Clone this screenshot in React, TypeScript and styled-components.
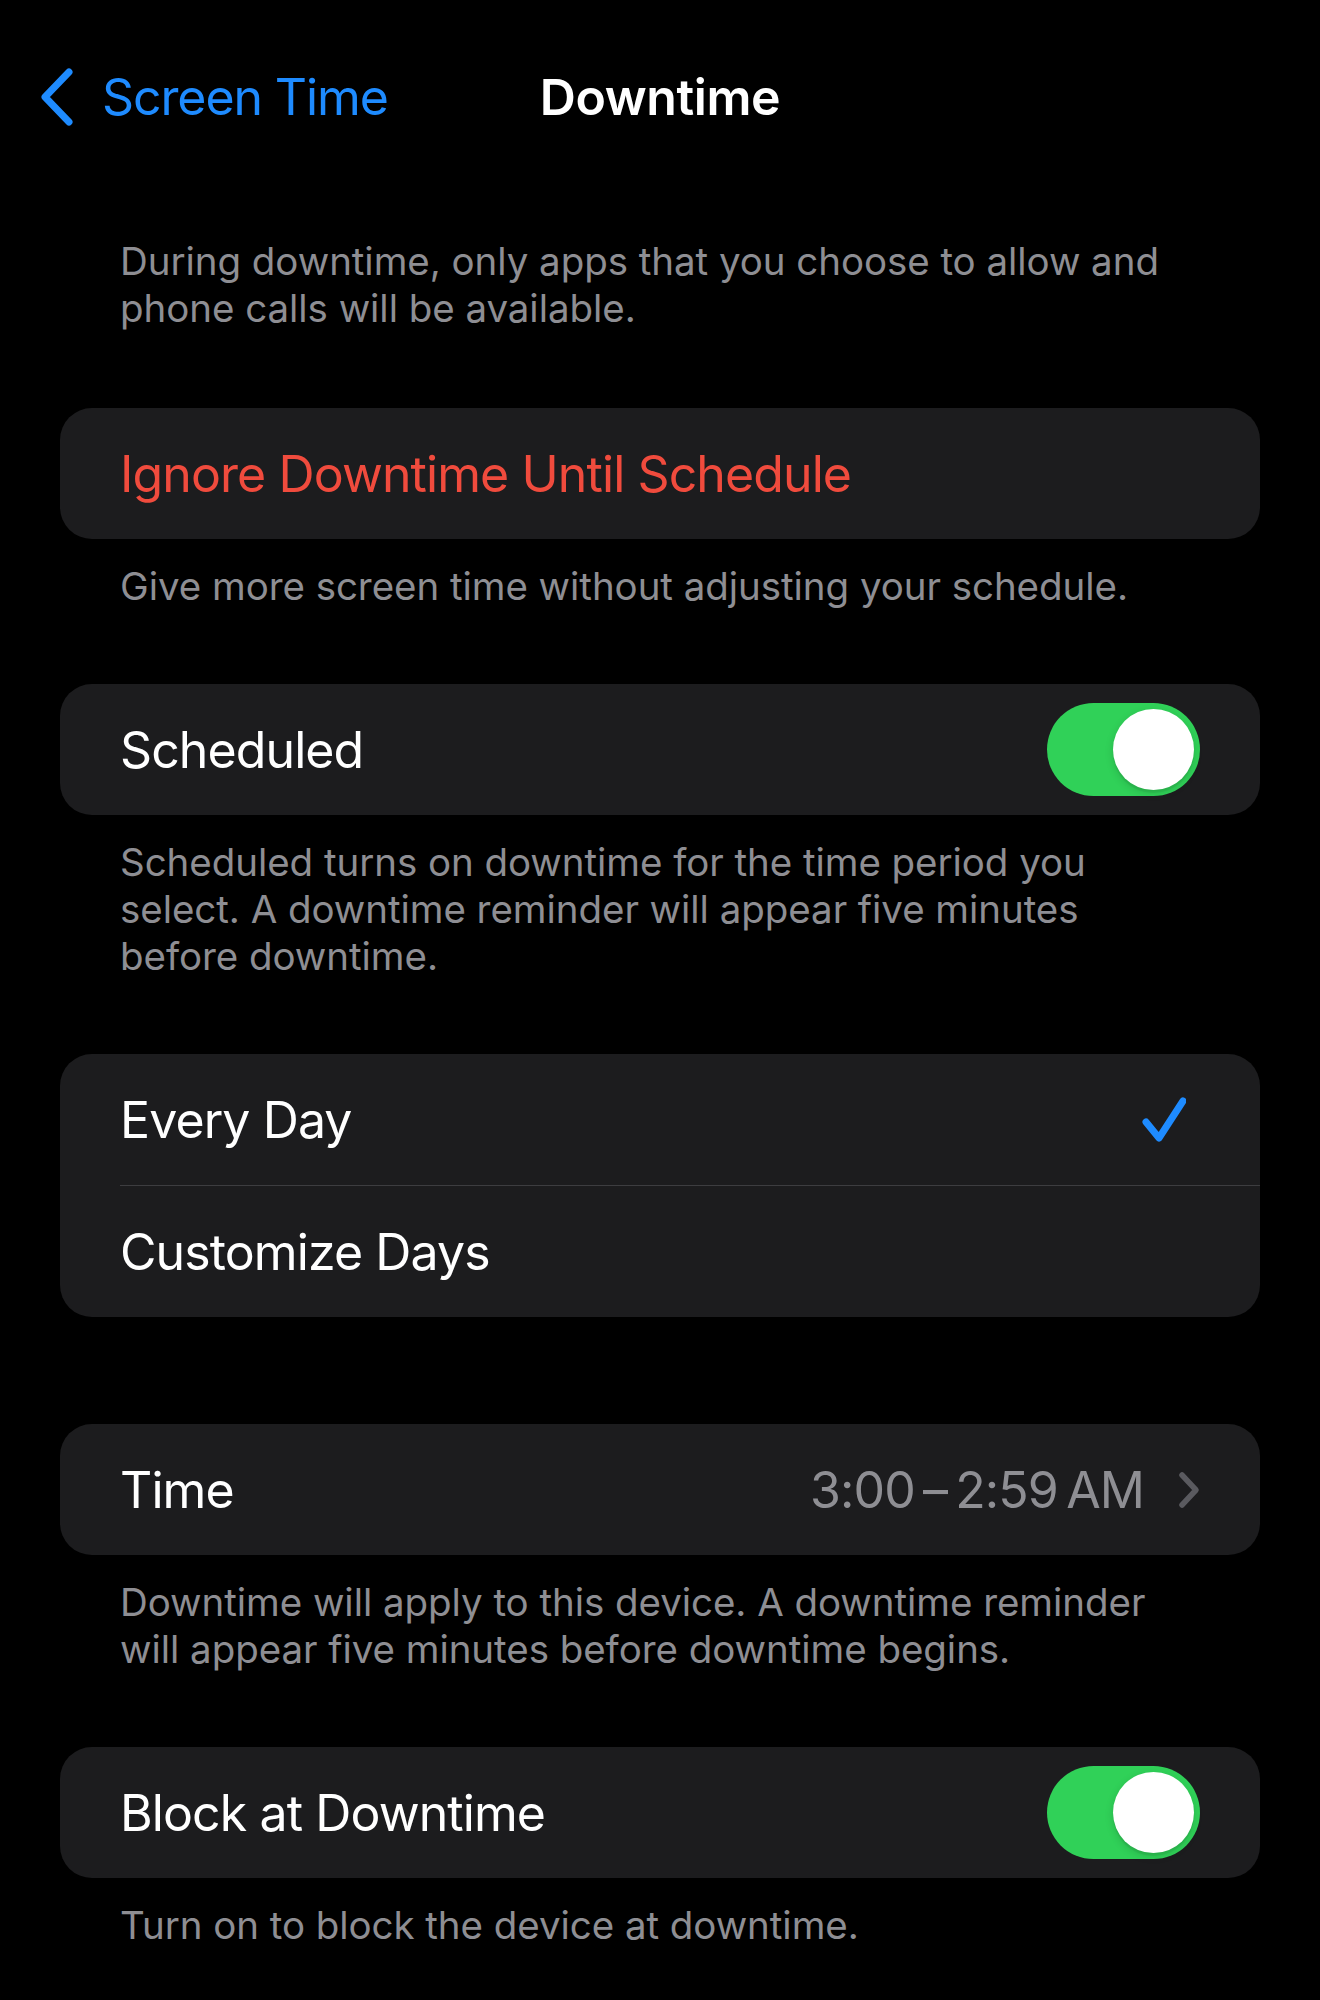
import React from "react";
import styled, { createGlobalStyle } from "styled-components";

const GlobalStyle = createGlobalStyle`
  html, body {
    margin: 0;
    padding: 0;
    background: #000;
  }
  body {
    font-family: Inter, "Noto Sans", "Liberation Sans", sans-serif;
    -webkit-font-smoothing: antialiased;
  }
`;

const Screen = styled.div`
  width: 1320px;
  min-height: 2000px;
  background: #000;
  color: #fff;
`;

const NavBar = styled.header`
  height: 194px;
  display: grid;
  grid-template-columns: 1fr auto 1fr;
  align-items: center;
  padding: 0 40px;
  box-sizing: border-box;
`;

const BackButton = styled.button`
  display: flex;
  align-items: center;
  gap: 28px;
  background: none;
  border: 0;
  padding: 0;
  justify-self: start;
  color: #1e8bff;
  font: inherit;
  font-size: 50px;
  letter-spacing: -1.1px;
  cursor: pointer;
`;

const Title = styled.h1`
  margin: 0;
  font-size: 50px;
  font-weight: 600;
  letter-spacing: -0.4px;
  color: #fff;
`;

const Intro = styled.p`
  margin: 44px 0 76px;
  padding: 0 150px 0 120px;
  font-size: 38.5px;
  line-height: 47px;
  letter-spacing: -0.05px;
  color: #8e8e93;
`;

const Group = styled.section<{ $after: number }>`
  margin-bottom: ${({ $after }) => $after}px;
`;

const Card = styled.div`
  margin: 0 60px;
  background: #1c1c1e;
  border-radius: 32px;
  overflow: hidden;
`;

const Row = styled.div`
  height: 131px;
  margin-left: 60px;
  padding-right: 60px;
  display: flex;
  align-items: center;
  justify-content: space-between;
  font-size: 50px;
  letter-spacing: -0.9px;
  color: #fff;

  & + & {
    border-top: 1px solid #3d3d40;
  }
`;

const Label = styled.span<{ $tone?: "danger" }>`
  color: ${({ $tone }) => ($tone === "danger" ? "#f04b3d" : "#fff")};
`;

const Value = styled.div`
  display: flex;
  align-items: center;
  gap: 34px;
  color: #8e8e93;
`;

const Footer = styled.p`
  margin: 0;
  padding: 24px 150px 0 120px;
  font-size: 38.5px;
  line-height: 47px;
  letter-spacing: -0.05px;
  color: #8e8e93;
`;

const Track = styled.div<{ $on: boolean }>`
  width: 153px;
  height: 93px;
  box-sizing: border-box;
  padding: 6px;
  border-radius: 47px;
  background: ${({ $on }) => ($on ? "#30d158" : "#39393d")};
  display: flex;
  justify-content: ${({ $on }) => ($on ? "flex-end" : "flex-start")};
`;

const Knob = styled.div`
  width: 81px;
  height: 81px;
  border-radius: 50%;
  background: #fff;
  box-shadow: 0 3px 8px rgba(0, 0, 0, 0.15), 0 3px 1px rgba(0, 0, 0, 0.06);
`;

const CheckMark = styled.svg`
  margin-right: 14px;
`;

const Toggle = ({ on }: { on: boolean }) => (
  <Track $on={on}>
    <Knob />
  </Track>
);

const Check = () => (
  <CheckMark width="44" height="46" viewBox="0 0 44 46">
    <path
      d="M4 25 L17 41 L41 4"
      fill="none"
      stroke="#1e8bff"
      strokeWidth="7"
      strokeLinecap="round"
      strokeLinejoin="round"
    />
  </CheckMark>
);

const Chevron = () => (
  <svg width="22" height="38" viewBox="0 0 22 38">
    <path
      d="M4 4 L18 19 L4 34"
      fill="none"
      stroke="#5a5a5f"
      strokeWidth="5.5"
      strokeLinecap="round"
      strokeLinejoin="round"
    />
  </svg>
);

const BackChevron = () => (
  <svg width="34" height="58" viewBox="0 0 34 58">
    <path
      d="M29 4 L5 29 L29 54"
      fill="none"
      stroke="#1e8bff"
      strokeWidth="7"
      strokeLinecap="round"
      strokeLinejoin="round"
    />
  </svg>
);

export default function App() {
  return (
    <Screen>
      <GlobalStyle />
      <NavBar>
        <BackButton>
          <BackChevron />
          Screen Time
        </BackButton>
        <Title>Downtime</Title>
        <span />
      </NavBar>

      <Intro>
        During downtime, only apps that you choose to allow and phone calls will be available.
      </Intro>

      <Group $after={74}>
        <Card>
          <Row>
            <Label $tone="danger">Ignore Downtime Until Schedule</Label>
          </Row>
        </Card>
        <Footer>Give more screen time without adjusting your schedule.</Footer>
      </Group>

      <Group $after={74}>
        <Card>
          <Row>
            <Label>Scheduled</Label>
            <Toggle on />
          </Row>
        </Card>
        <Footer>
          Scheduled turns on downtime for the time period you select. A downtime reminder will
          appear five minutes before downtime.
        </Footer>
      </Group>

      <Group $after={107}>
        <Card>
          <Row>
            <Label>Every Day</Label>
            <Check />
          </Row>
          <Row>
            <Label>Customize Days</Label>
          </Row>
        </Card>
      </Group>

      <Group $after={74}>
        <Card>
          <Row>
            <Label>Time</Label>
            <Value>
              <span>3:00&#8201;–&#8201;2:59&#8201;AM</span>
              <Chevron />
            </Value>
          </Row>
        </Card>
        <Footer>
          Downtime will apply to this device. A downtime reminder will appear five minutes before
          downtime begins.
        </Footer>
      </Group>

      <Group $after={0}>
        <Card>
          <Row>
            <Label>Block at Downtime</Label>
            <Toggle on />
          </Row>
        </Card>
        <Footer>Turn on to block the device at downtime.</Footer>
      </Group>
    </Screen>
  );
}
